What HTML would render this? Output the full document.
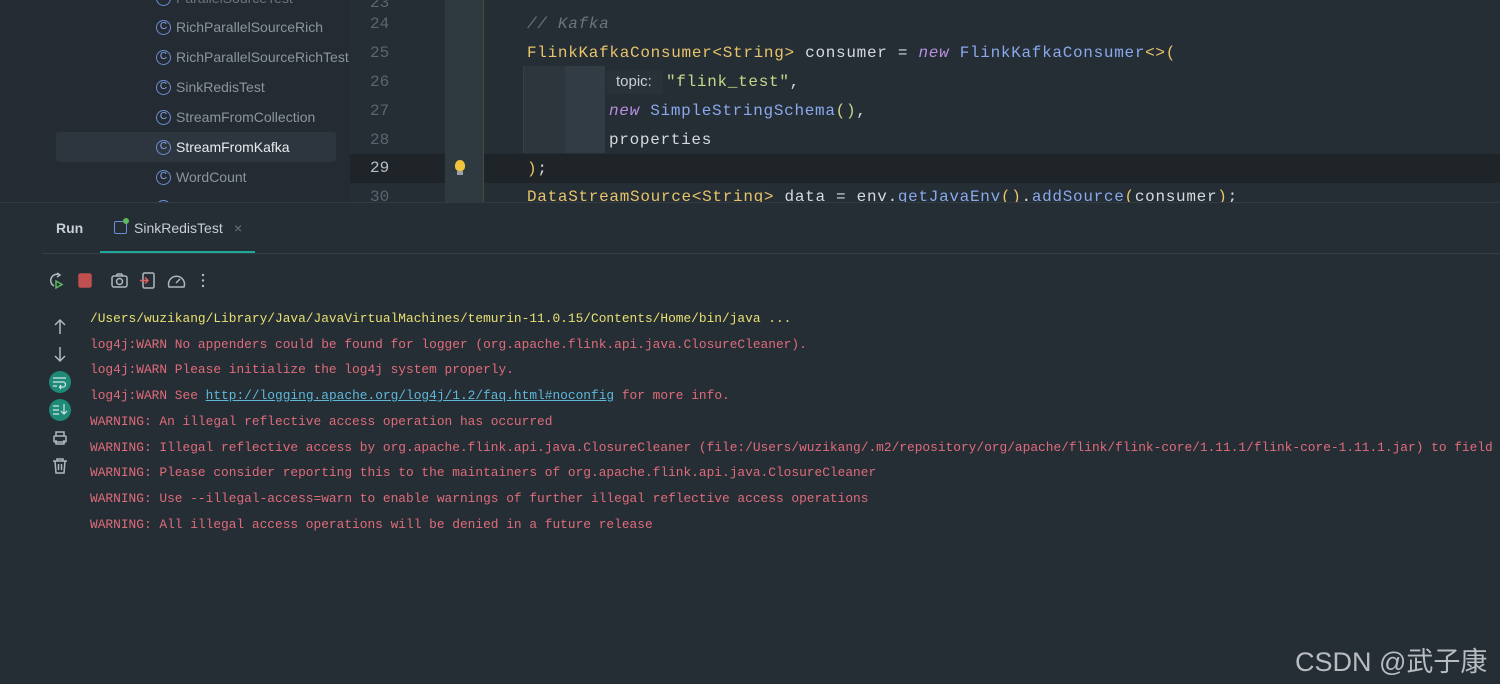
<!DOCTYPE html>
<html><head><meta charset="utf-8"><style>
*{margin:0;padding:0;box-sizing:border-box}
body{width:1500px;height:684px;overflow:hidden;background:#252d35;position:relative;font-family:"Liberation Sans",sans-serif}
.a{position:absolute;white-space:pre}
.side{left:0;top:0;width:350px;height:202px;background:#242b32}
.it{font-size:14px;color:#8c959d;left:176px}
.ci{position:absolute;left:-20px;top:1px;width:15px;height:15px;border:1.5px solid #6b8fd6;border-radius:50%;font-size:10px;color:#8ea8e6;text-align:center;line-height:12px}
.ln{font-family:"Liberation Mono",monospace;font-size:16px;color:#5b6670;left:370px}
.code{font-family:"Liberation Mono",monospace;font-size:16px;letter-spacing:0.7px;left:527px;color:#d5dade}
.con{font-family:"Liberation Mono",monospace;font-size:12.85px;left:90px;color:#e06c7a}
.y{color:#e8c46a}.p{color:#b88ee0;font-style:italic}.b{color:#8aa8ec}.g{color:#c8d88a}.c{color:#6b757e;font-style:italic}
</style></head><body>
<div class="a side"></div>
<div class="a" style="left:56px;top:132px;width:280px;height:30px;background:#2d363e;border-radius:3px"></div>
<div class="a it" style="top:-10px;color:#6b747c"><span class="ci">C</span>ParallelSourceTest</div>
<div class="a it" style="top:19px"><span class="ci">C</span>RichParallelSourceRich</div>
<div class="a it" style="top:49px"><span class="ci">C</span>RichParallelSourceRichTest</div>
<div class="a it" style="top:79px"><span class="ci">C</span>SinkRedisTest</div>
<div class="a it" style="top:109px"><span class="ci">C</span>StreamFromCollection</div>
<div class="a it" style="top:139px;color:#e8ecef"><span class="ci">C</span>StreamFromKafka</div>
<div class="a it" style="top:169px"><span class="ci">C</span>WordCount</div>
<div class="a it" style="top:199px"><span class="ci">C</span>WordCount</div>
<div class="a" style="left:350px;top:154px;width:1150px;height:29px;background:#1e2428"></div>
<div class="a" style="left:445px;top:0;width:38px;height:202px;background:#2f3940"></div>
<div class="a" style="left:483px;top:0;width:1px;height:202px;background:#4a4a3a"></div>
<div class="a" style="left:523px;top:66px;width:42px;height:87px;background:#2d363d;border-left:1px solid #3a4038"></div>
<div class="a" style="left:565px;top:66px;width:40px;height:87px;background:#323c44"></div>
<div class="a" style="left:455px;top:160px;width:10px;height:11px;background:#f0c43a;border-radius:50% 50% 40% 40%"></div>
<div class="a" style="left:457px;top:171px;width:6px;height:4px;background:#9aa0a6"></div>
<div class="a ln" style="top:-6px">23</div>
<div class="a ln" style="top:15px">24</div>
<div class="a ln" style="top:44px">25</div>
<div class="a ln" style="top:73px">26</div>
<div class="a ln" style="top:102px">27</div>
<div class="a ln" style="top:131px">28</div>
<div class="a ln" style="top:159px;color:#b8c0c6">29</div>
<div class="a ln" style="top:188px">30</div>
<div class="a code c" style="top:15px">// Kafka</div>
<div class="a code" style="top:44px"><span class="y">FlinkKafkaConsumer&lt;String&gt;</span> consumer = <span class="p">new</span> <span class="b">FlinkKafkaConsumer</span><span class="y">&lt;&gt;(</span></div>
<div class="a" style="left:607px;top:70px;width:56px;height:24px;background:#2a3239"></div>
<div class="a" style="left:616px;top:73px;font-size:15px;color:#c8ced3">topic:</div>
<div class="a code" style="top:73px;left:666px"><span class="g">"flink_test"</span>,</div>
<div class="a code" style="top:102px;left:609px"><span class="p">new</span> <span class="b">SimpleStringSchema</span><span class="g">()</span>,</div>
<div class="a code" style="top:131px;left:609px">properties</div>
<div class="a code" style="top:160px"><span class="y">)</span>;</div>
<div class="a code" style="top:188px"><span class="y">DataStreamSource&lt;String&gt;</span> data = env.<span class="b">getJavaEnv</span><span class="y">()</span>.<span class="b">addSource</span><span class="y">(</span>consumer<span class="y">)</span>;</div>
<div class="a" style="left:0;top:202px;width:1500px;height:482px;background:#252d35;border-top:1px solid #323a42"></div>
<div class="a" style="left:56px;top:220px;font-size:14px;font-weight:bold;color:#c8ced3">Run</div>
<div class="a" style="left:114px;top:221px;width:13px;height:13px;border:1.5px solid #6b8fd6;border-radius:2px"></div>
<div class="a" style="left:123px;top:218px;width:6px;height:6px;background:#5fb85f;border-radius:50%"></div>
<div class="a" style="left:134px;top:220px;font-size:14px;color:#c8ced3">SinkRedisTest</div>
<div class="a" style="left:234px;top:220px;font-size:14px;color:#6b747c">×</div>
<div class="a" style="left:100px;top:251px;width:155px;height:3px;background:#20a89a"></div>
<div class="a" style="left:42px;top:253px;width:1458px;height:1px;background:#343c44"></div>
<svg class="a" style="left:44px;top:268px" width="180" height="26" fill="none" stroke-width="1.5">
<path d="M16 7 A6 6 0 1 0 10 18" stroke="#b0b8be"/><path d="M13 5 l3 2 -3 2" stroke="#b0b8be"/><path d="M12 13 l6 3.5 -6 3.5z" stroke="#5fb85f"/>
<rect x="35" y="6" width="12" height="13" rx="1.5" fill="#c05050" stroke="#c05050"/>
<rect x="68" y="8" width="15" height="11" rx="2" stroke="#b0b8be"/><circle cx="75.5" cy="13.5" r="3" stroke="#b0b8be"/><path d="M72 8 l1.5-2 h4 l1.5 2" stroke="#b0b8be"/>
<rect x="99" y="5" width="11" height="15" rx="1.5" stroke="#b0b8be"/><path d="M96 12.5 h8 m-3 -3 l3 3 -3 3" stroke="#e06060"/>
<path d="M125 19 a8 8 0 1 1 15 0 z" stroke="#b0b8be"/><path d="M132 15 l4-4" stroke="#b0b8be"/>
<circle cx="159" cy="7" r="1.2" fill="#b0b8be" stroke="none"/><circle cx="159" cy="12.5" r="1.2" fill="#b0b8be" stroke="none"/><circle cx="159" cy="18" r="1.2" fill="#b0b8be" stroke="none"/>
</svg>
<svg class="a" style="left:48px;top:316px" width="26" height="160" fill="none" stroke="#b0b8be" stroke-width="1.5">
<path d="M12 4 v14 M7 9 l5-5 5 5"/><path d="M12 31 v14 M7 40 l5 5 5-5"/>
<circle cx="12" cy="66" r="11" fill="#1e8a78" stroke="none"/><path d="M5 62 h13 M5 66 h10 a2.5 2.5 0 0 1 0 5 h-3 M5 70 h4 M13 69 l-1.5 2 1.5 2" stroke="#d8e8e4" stroke-width="1.2"/>
<circle cx="12" cy="94" r="11" fill="#1e8a78" stroke="none"/><path d="M5 90 h6 M5 94 h6 M5 98 h6 M16 88 v10 M13 95 l3 3 3-3" stroke="#d8e8e4" stroke-width="1.2"/>
<rect x="6" y="120" width="12" height="6" rx="1"/><path d="M8 120 v-4 h8 v4 M8 124 v4 h8 v-4"/>
<path d="M5 145 h14 M9 145 v-2 h6 v2 M7 145 l1 12 h8 l1-12 M10.5 148 v6 M13.5 148 v6"/>
</svg>
<div class="a con" style="top:311px;color:#e8e070">/Users/wuzikang/Library/Java/JavaVirtualMachines/temurin-11.0.15/Contents/Home/bin/java ...</div>
<div class="a con" style="top:337px">log4j:WARN No appenders could be found for logger (org.apache.flink.api.java.ClosureCleaner).</div>
<div class="a con" style="top:362px">log4j:WARN Please initialize the log4j system properly.</div>
<div class="a con" style="top:388px">log4j:WARN See <span style="color:#5fb8d8;text-decoration:underline">http://logging.apache.org/log4j/1.2/faq.html#noconfig</span> for more info.</div>
<div class="a con" style="top:414px">WARNING: An illegal reflective access operation has occurred</div>
<div class="a con" style="top:440px">WARNING: Illegal reflective access by org.apache.flink.api.java.ClosureCleaner (file:/Users/wuzikang/.m2/repository/org/apache/flink/flink-core/1.11.1/flink-core-1.11.1.jar) to field</div>
<div class="a con" style="top:465px">WARNING: Please consider reporting this to the maintainers of org.apache.flink.api.java.ClosureCleaner</div>
<div class="a con" style="top:491px">WARNING: Use --illegal-access=warn to enable warnings of further illegal reflective access operations</div>
<div class="a con" style="top:517px">WARNING: All illegal access operations will be denied in a future release</div>
<div class="a" style="left:1295px;top:640px;font-size:27px;color:#b8bcc0;font-family:'Liberation Sans','Noto Sans CJK SC',sans-serif">CSDN @武子康</div>
</body></html>
